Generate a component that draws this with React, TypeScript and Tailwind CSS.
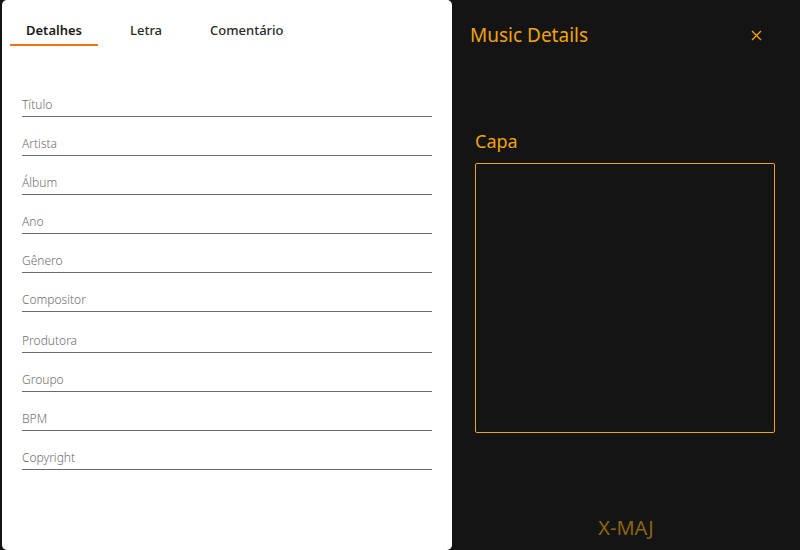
import React from "react";

const fields = [
  "Título",
  "Artista",
  "Álbum",
  "Ano",
  "Gênero",
  "Compositor",
  "Produtora",
  "Groupo",
  "BPM",
  "Copyright",
];

export default function App() {
  return (
    <div
      className="flex h-[550px] w-[800px] bg-[#141414]"
      style={{ fontFamily: '"Noto Sans", "Open Sans", sans-serif' }}
    >
      <div className="ml-[2px] flex h-[550px] w-[450px] flex-col rounded-[5px] bg-white">
        <div className="mt-[14px] flex gap-[16px] pl-[8px]">
          <div className="border-b-2 border-[#f27314] px-[16px] pb-[4px] pt-[6px] text-[13px] font-semibold leading-[20px] text-[#1a1a1a]">
            Detalhes
          </div>
          <div className="border-b-2 border-transparent px-[16px] pb-[4px] pt-[6px] text-[13px] font-medium leading-[20px] text-[#2a2a2a]">
            Letra
          </div>
          <div className="border-b-2 border-transparent px-[16px] pb-[4px] pt-[6px] text-[13px] font-medium leading-[20px] text-[#2a2a2a]">
            Comentário
          </div>
        </div>
        <div className="mx-[20px] mt-[50px] flex flex-col gap-[18px]">
          {fields.map((f) => (
            <div
              key={f}
              className={`border-b border-[#6b6b6b] pb-[3px] pt-[1px] text-[12px] font-light leading-[16px] text-[#6e6e6e] ${
                f === "Produtora" ? "mt-[2px]" : ""
              }`}
            >
              {f}
            </div>
          ))}
        </div>
      </div>
      <div className="flex flex-1 flex-col">
        <div className="mt-[23px] flex items-center justify-between pl-[18px] pr-[38px]">
          <div className="text-[19px] leading-[24px] text-[#f2a20c]">Music Details</div>
          <svg width="11" height="11" viewBox="0 0 11 11" className="mt-[1px]">
            <path d="M1 1 L10 10 M10 1 L1 10" stroke="#f2a20c" strokeWidth="1.4" />
          </svg>
        </div>
        <div className="ml-[23px] mt-[82px] text-[18px] leading-[24px] text-[#f2a20c]">Capa</div>
        <div className="ml-[23px] mt-[10px] h-[270px] w-[300px] rounded-[2px] border border-[#f2a20c]" />
        <div className="mt-[82px] text-center text-[20px] leading-[26px] text-[#8c6412]">X-MAJ</div>
      </div>
    </div>
  );
}
